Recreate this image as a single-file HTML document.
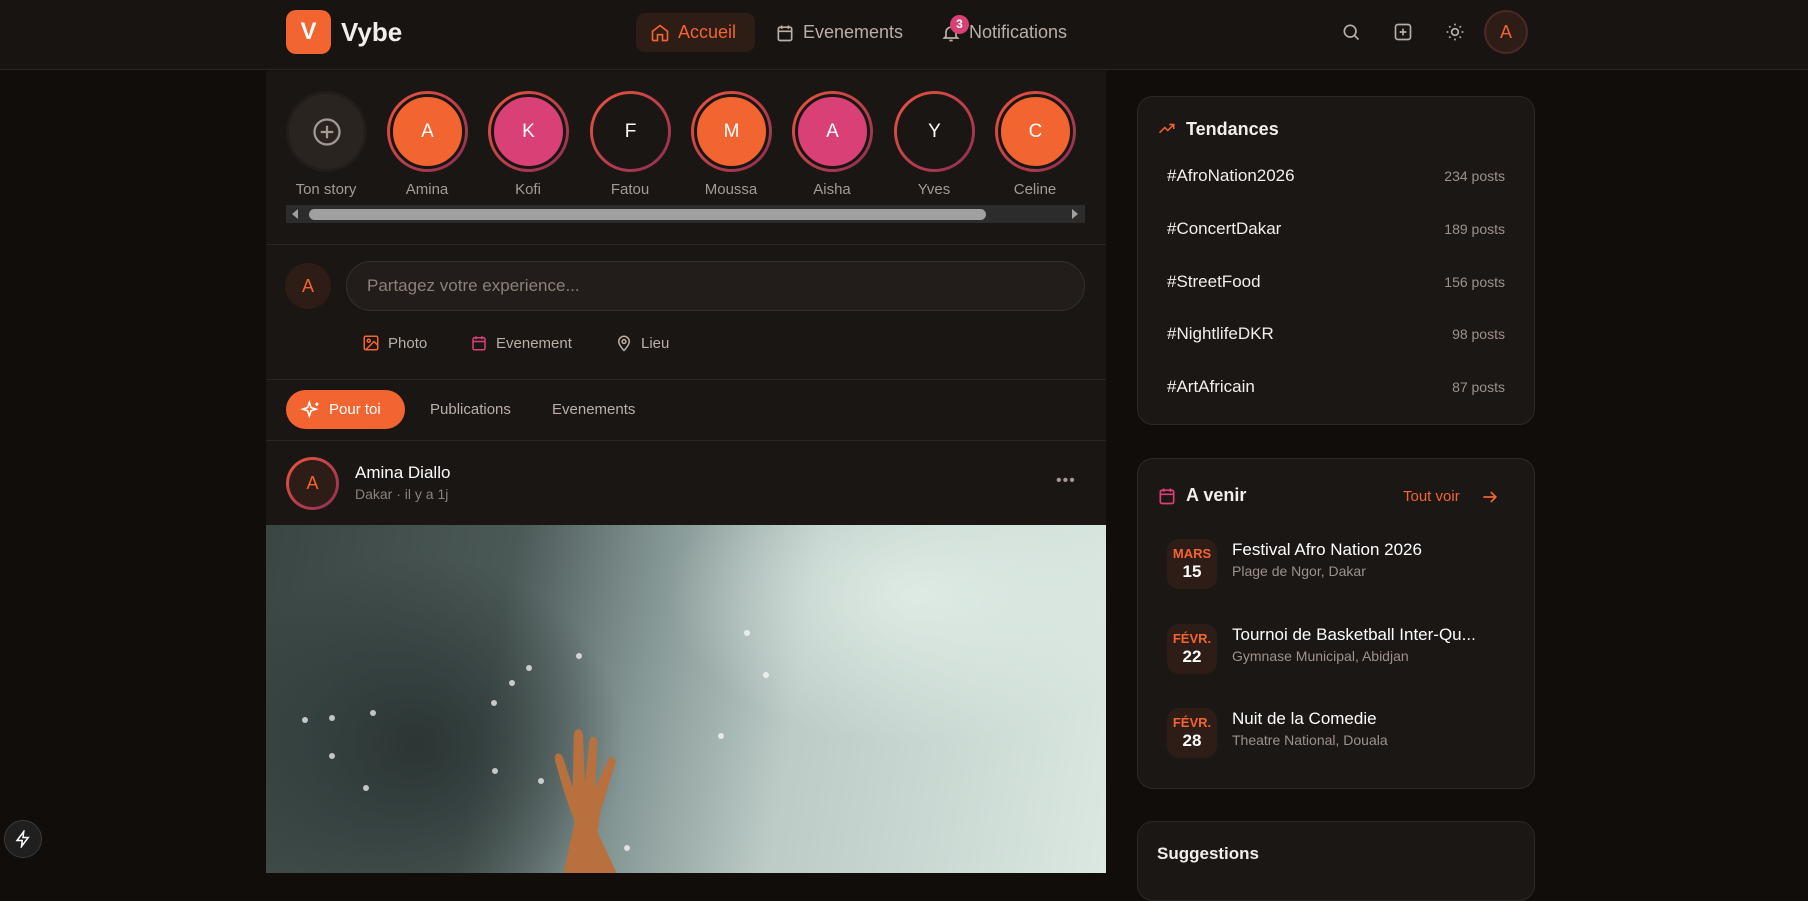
<!DOCTYPE html>
<html><head><meta charset="utf-8"><style>
*{box-sizing:border-box;margin:0;padding:0}
body{width:1808px;height:873px;overflow:hidden;background:#110d0b;font-family:"Liberation Sans",sans-serif;color:#f2eeeb;position:relative}
.abs{position:absolute}
.hdr{left:0;top:0;width:1808px;height:70px;background:#181412;border-bottom:1px solid #2d2724}
.logo{left:286px;top:10px;width:45px;height:44px;border-radius:10px;background:#f26430;color:#fff;font-weight:bold;font-size:24px;display:flex;align-items:center;justify-content:center}
.brand{left:341px;top:17px;font-size:26px;font-weight:bold}
.nav{top:13px;height:39px;display:flex;align-items:center;gap:8px;font-size:18px;color:#b9afa8}
.main{left:266px;top:71px;width:840px;height:802px;background:#1a1614}
.story{width:81px;height:81px;border-radius:50%;top:91px;display:flex;align-items:center;justify-content:center;background:linear-gradient(135deg,#f0543f,#8a2e55)}
.story i{display:flex;width:75px;height:75px;border-radius:50%;border:3px solid #1a1614;align-items:center;justify-content:center;font-style:normal;font-size:19px;color:#fff}
.lbl{top:181px;width:100px;text-align:center;font-size:15px;color:#a49a93}
.line{height:1px;background:#2d2724;left:266px;width:840px}
.card{left:1137px;width:398px;background:#1b1715;border:1px solid #2e2825;border-radius:16px}
.tr{left:1167px;width:338px;display:flex;justify-content:space-between;align-items:center;font-size:17px}
.tr span{font-size:14px;color:#9c928b}
.db{left:1167px;width:50px;height:50px;border-radius:12px;background:#2e1d16;text-align:center;padding-top:7px}
.db b{display:block;color:#f26430;font-size:13px}
.db em{display:block;font-style:normal;font-weight:bold;font-size:17px;color:#fff;margin-top:1px}
.et{left:1232px;font-size:17px;color:#fff}
.es{left:1232px;font-size:14px;color:#9c928b}
.dot{position:absolute;width:6px;height:6px;border-radius:50%;background:rgba(255,255,255,.7)}
</style></head><body>
<div class="abs hdr"></div>
<div class="abs logo">V</div>
<div class="abs brand">Vybe</div>
<div class="abs" style="left:636px;top:13px;width:119px;height:39px;border-radius:9px;background:#2e1d16"></div>
<div class="abs nav" style="left:650px;color:#f26430"><svg width="20" height="20" viewBox="0 0 24 24" fill="none" stroke="#f26430" stroke-width="2"><path d="M3 10l9-7 9 7v10a1 1 0 0 1-1 1h-5v-7H9v7H4a1 1 0 0 1-1-1z"/></svg>Accueil</div>
<div class="abs nav" style="left:775px"><svg width="20" height="20" viewBox="0 0 24 24" fill="none" stroke="#b9afa8" stroke-width="2"><rect x="4" y="5" width="16" height="16" rx="2"/><path d="M8 3v4M16 3v4M4 10h16"/></svg>Evenements</div>
<div class="abs nav" style="left:941px"><svg width="20" height="20" viewBox="0 0 24 24" fill="none" stroke="#b9afa8" stroke-width="2"><path d="M6 16V11a6 6 0 0 1 12 0v5l2 2H4zM10 21h4"/></svg>Notifications</div>
<div class="abs" style="left:950px;top:15px;width:19px;height:19px;border-radius:50%;background:#d94076;color:#fff;font-size:12px;font-weight:bold;text-align:center;line-height:19px">3</div>
<svg class="abs" style="left:1341px;top:22px" width="20" height="20" viewBox="0 0 24 24" fill="none" stroke="#b9afa8" stroke-width="2"><circle cx="11" cy="11" r="7"/><path d="M16 16l5 5"/></svg>
<svg class="abs" style="left:1393px;top:22px" width="20" height="20" viewBox="0 0 24 24" fill="none" stroke="#b9afa8" stroke-width="2"><rect x="3" y="3" width="18" height="18" rx="3"/><path d="M12 8v8M8 12h8"/></svg>
<svg class="abs" style="left:1445px;top:22px" width="20" height="20" viewBox="0 0 24 24" fill="none" stroke="#b9afa8" stroke-width="2"><circle cx="12" cy="12" r="4"/><path d="M12 2v2M12 20v2M2 12h2M20 12h2M5 5l1.5 1.5M17.5 17.5L19 19M5 19l1.5-1.5M17.5 6.5L19 5"/></svg>
<div class="abs" style="left:1484px;top:10px;width:44px;height:44px;border-radius:50%;background:#2e1d16;border:2px solid #4a2a22;color:#f26430;font-size:18px;display:flex;align-items:center;justify-content:center">A</div>

<div class="abs main"></div>
<div class="abs" style="left:286px;top:91px;width:81px;height:81px;border-radius:50%;background:#2a2421;border:3px solid #221d1a;display:flex;align-items:center;justify-content:center"><svg width="30" height="30" viewBox="0 0 24 24" fill="none" stroke="#a49a93" stroke-width="1.8"><circle cx="12" cy="12" r="10"/><path d="M12 7v10M7 12h10"/></svg></div>
<div class="abs lbl" style="left:276px">Ton story</div>
<div class="abs story" style="left:387px"><i style="background:#f26430">A</i></div><div class="abs lbl" style="left:377px">Amina</div>
<div class="abs story" style="left:488px"><i style="background:#d94076">K</i></div><div class="abs lbl" style="left:478px">Kofi</div>
<div class="abs story" style="left:590px"><i style="background:#1a1614">F</i></div><div class="abs lbl" style="left:580px">Fatou</div>
<div class="abs story" style="left:691px"><i style="background:#f26430">M</i></div><div class="abs lbl" style="left:681px">Moussa</div>
<div class="abs story" style="left:792px"><i style="background:#d94076">A</i></div><div class="abs lbl" style="left:782px">Aisha</div>
<div class="abs story" style="left:894px"><i style="background:#1a1614">Y</i></div><div class="abs lbl" style="left:884px">Yves</div>
<div class="abs story" style="left:995px"><i style="background:#f26430">C</i></div><div class="abs lbl" style="left:985px">Celine</div>
<div class="abs" style="left:286px;top:205px;width:799px;height:18px;background:#2c2c2c"></div>
<div class="abs" style="left:309px;top:209px;width:677px;height:11px;border-radius:6px;background:#a0a0a0"></div>
<div class="abs" style="left:292px;top:209px;width:0;height:0;border:5px solid transparent;border-right:6px solid #a0a0a0;border-left:0"></div>
<div class="abs" style="left:1072px;top:209px;width:0;height:0;border:5px solid transparent;border-left:6px solid #a0a0a0;border-right:0"></div>
<div class="abs line" style="top:244px"></div>

<div class="abs" style="left:285px;top:263px;width:46px;height:46px;border-radius:50%;background:#2e1d16;color:#f26430;font-size:18px;display:flex;align-items:center;justify-content:center">A</div>
<div class="abs" style="left:346px;top:261px;width:739px;height:50px;border-radius:25px;background:#221d1a;border:1px solid #35302c;color:#8a817a;font-size:17px;padding:14px 20px">Partagez votre experience...</div>
<div class="abs" style="left:362px;top:334px;font-size:15px;color:#b9afa8;display:flex;align-items:center;gap:8px"><svg width="18" height="18" viewBox="0 0 24 24" fill="none" stroke="#f26430" stroke-width="2"><rect x="3" y="3" width="18" height="18" rx="2"/><circle cx="9" cy="9" r="2"/><path d="M21 15l-5-5L5 21"/></svg>Photo</div>
<div class="abs" style="left:470px;top:334px;font-size:15px;color:#b9afa8;display:flex;align-items:center;gap:8px"><svg width="18" height="18" viewBox="0 0 24 24" fill="none" stroke="#d94076" stroke-width="2"><rect x="4" y="5" width="16" height="16" rx="2"/><path d="M8 3v4M16 3v4M4 10h16"/></svg>Evenement</div>
<div class="abs" style="left:615px;top:334px;font-size:15px;color:#b9afa8;display:flex;align-items:center;gap:8px"><svg width="18" height="18" viewBox="0 0 24 24" fill="none" stroke="#b9afa8" stroke-width="2"><path d="M12 22s7-7 7-12a7 7 0 0 0-14 0c0 5 7 12 7 12z"/><circle cx="12" cy="10" r="2.5"/></svg>Lieu</div>
<div class="abs line" style="top:379px"></div>

<div class="abs" style="left:286px;top:390px;width:119px;height:39px;border-radius:20px;background:#f26430;color:#fff;font-size:15px;display:flex;align-items:center;gap:8px;padding-left:15px"><svg width="20" height="20" viewBox="0 0 24 24" fill="none" stroke="#fff" stroke-width="2"><path d="M10 3l2 6 6 2-6 2-2 6-2-6-6-2 6-2zM19 3v4M17 5h4"/></svg>Pour toi</div>
<div class="abs" style="left:430px;top:401px;font-size:15px;color:#b9afa8">Publications</div>
<div class="abs" style="left:552px;top:401px;font-size:15px;color:#b9afa8">Evenements</div>
<div class="abs line" style="top:440px"></div>

<div class="abs" style="left:286px;top:457px;width:53px;height:53px;border-radius:50%;background:linear-gradient(135deg,#f0543f,#8a2e55);padding:3px"><div style="width:47px;height:47px;border-radius:50%;background:#2e1d16;color:#f26430;font-size:18px;display:flex;align-items:center;justify-content:center">A</div></div>
<div class="abs" style="left:355px;top:463px;font-size:17px;color:#fff">Amina Diallo</div>
<div class="abs" style="left:355px;top:486px;font-size:14px;color:#8a817a">Dakar · il y a 1j</div>
<div class="abs" style="left:1056px;top:472px;font-size:16px;color:#a49a93;letter-spacing:1px">•••</div>

<div class="abs" style="left:266px;top:525px;width:840px;height:348px;overflow:hidden;background:linear-gradient(100deg,#3a4644 0%,#4a5856 28%,#869896 45%,#bccbc6 62%,#dbe8e2 100%)">
<div class="abs" style="left:-60px;top:30px;width:420px;height:380px;border-radius:50%;background:radial-gradient(#2a3534,transparent 70%)"></div>
<div class="abs" style="left:400px;top:-80px;width:500px;height:300px;border-radius:50%;background:radial-gradient(rgba(232,244,238,.7),transparent 70%)"></div>
<div class="dot" style="left:63px;top:190px"></div><div class="dot" style="left:36px;top:192px"></div><div class="dot" style="left:63px;top:228px"></div><div class="dot" style="left:104px;top:185px"></div><div class="dot" style="left:97px;top:260px"></div><div class="dot" style="left:225px;top:175px"></div><div class="dot" style="left:260px;top:140px"></div><div class="dot" style="left:243px;top:155px"></div><div class="dot" style="left:310px;top:128px"></div><div class="dot" style="left:226px;top:243px"></div><div class="dot" style="left:272px;top:253px"></div><div class="dot" style="left:478px;top:105px"></div><div class="dot" style="left:358px;top:320px"></div><div class="dot" style="left:452px;top:208px"></div><div class="dot" style="left:497px;top:147px"></div>
<svg class="abs" style="left:252px;top:168px" width="130" height="185" viewBox="0 0 120 180"><path d="M40 180 L52 125 C45 108 38 85 33 66 C31 58 38 56 41 64 L50 92 L51 42 C51 33 60 33 60 42 L62 88 L66 48 C67 40 75 41 74 49 L72 92 L84 66 C87 59 94 63 91 70 L77 115 L74 135 L95 180Z" fill="#b8703e"/></svg>
</div>

<div class="abs card" style="top:96px;height:329px"></div>
<svg class="abs" style="left:1157px;top:120px" width="20" height="18" viewBox="0 0 24 24" fill="none" stroke="#f26430" stroke-width="2"><path d="M2 17l7-7 4 4 8-8M15 6h6v6"/></svg>
<div class="abs" style="left:1186px;top:119px;font-size:18px;font-weight:bold">Tendances</div>
<div class="abs tr" style="top:166px">#AfroNation2026<span>234 posts</span></div>
<div class="abs tr" style="top:219px">#ConcertDakar<span>189 posts</span></div>
<div class="abs tr" style="top:272px">#StreetFood<span>156 posts</span></div>
<div class="abs tr" style="top:324px">#NightlifeDKR<span>98 posts</span></div>
<div class="abs tr" style="top:377px">#ArtAfricain<span>87 posts</span></div>

<div class="abs card" style="top:458px;height:331px"></div>
<svg class="abs" style="left:1157px;top:486px" width="20" height="20" viewBox="0 0 24 24" fill="none" stroke="#d94076" stroke-width="2"><rect x="4" y="5" width="16" height="16" rx="2"/><path d="M8 3v4M16 3v4M4 10h16"/></svg>
<div class="abs" style="left:1186px;top:485px;font-size:18px;font-weight:bold">A venir</div>
<div class="abs" style="left:1403px;top:488px;font-size:15px;color:#f26430">Tout voir</div>
<svg class="abs" style="left:1480px;top:487px" width="20" height="20" viewBox="0 0 24 24" fill="none" stroke="#f26430" stroke-width="2"><path d="M4 12h15M13 6l6 6-6 6"/></svg>
<div class="abs db" style="top:539px"><b>MARS</b><em>15</em></div>
<div class="abs et" style="top:540px">Festival Afro Nation 2026</div><div class="abs es" style="top:563px">Plage de Ngor, Dakar</div>
<div class="abs db" style="top:624px"><b>FÉVR.</b><em>22</em></div>
<div class="abs et" style="top:625px">Tournoi de Basketball Inter-Qu...</div><div class="abs es" style="top:648px">Gymnase Municipal, Abidjan</div>
<div class="abs db" style="top:708px"><b>FÉVR.</b><em>28</em></div>
<div class="abs et" style="top:709px">Nuit de la Comedie</div><div class="abs es" style="top:732px">Theatre National, Douala</div>

<div class="abs card" style="top:821px;height:80px"></div>
<div class="abs" style="left:1157px;top:844px;font-size:17px;font-weight:bold">Suggestions</div>

<div class="abs" style="left:4px;top:820px;width:38px;height:38px;border-radius:50%;background:#1f1f1f;border:1px solid #3a3a3a;display:flex;align-items:center;justify-content:center"><svg width="18" height="18" viewBox="0 0 24 24" fill="none" stroke="#fff" stroke-width="2"><path d="M13 2L4 14h7l-1 8 9-12h-7z"/></svg></div>
</body></html>
